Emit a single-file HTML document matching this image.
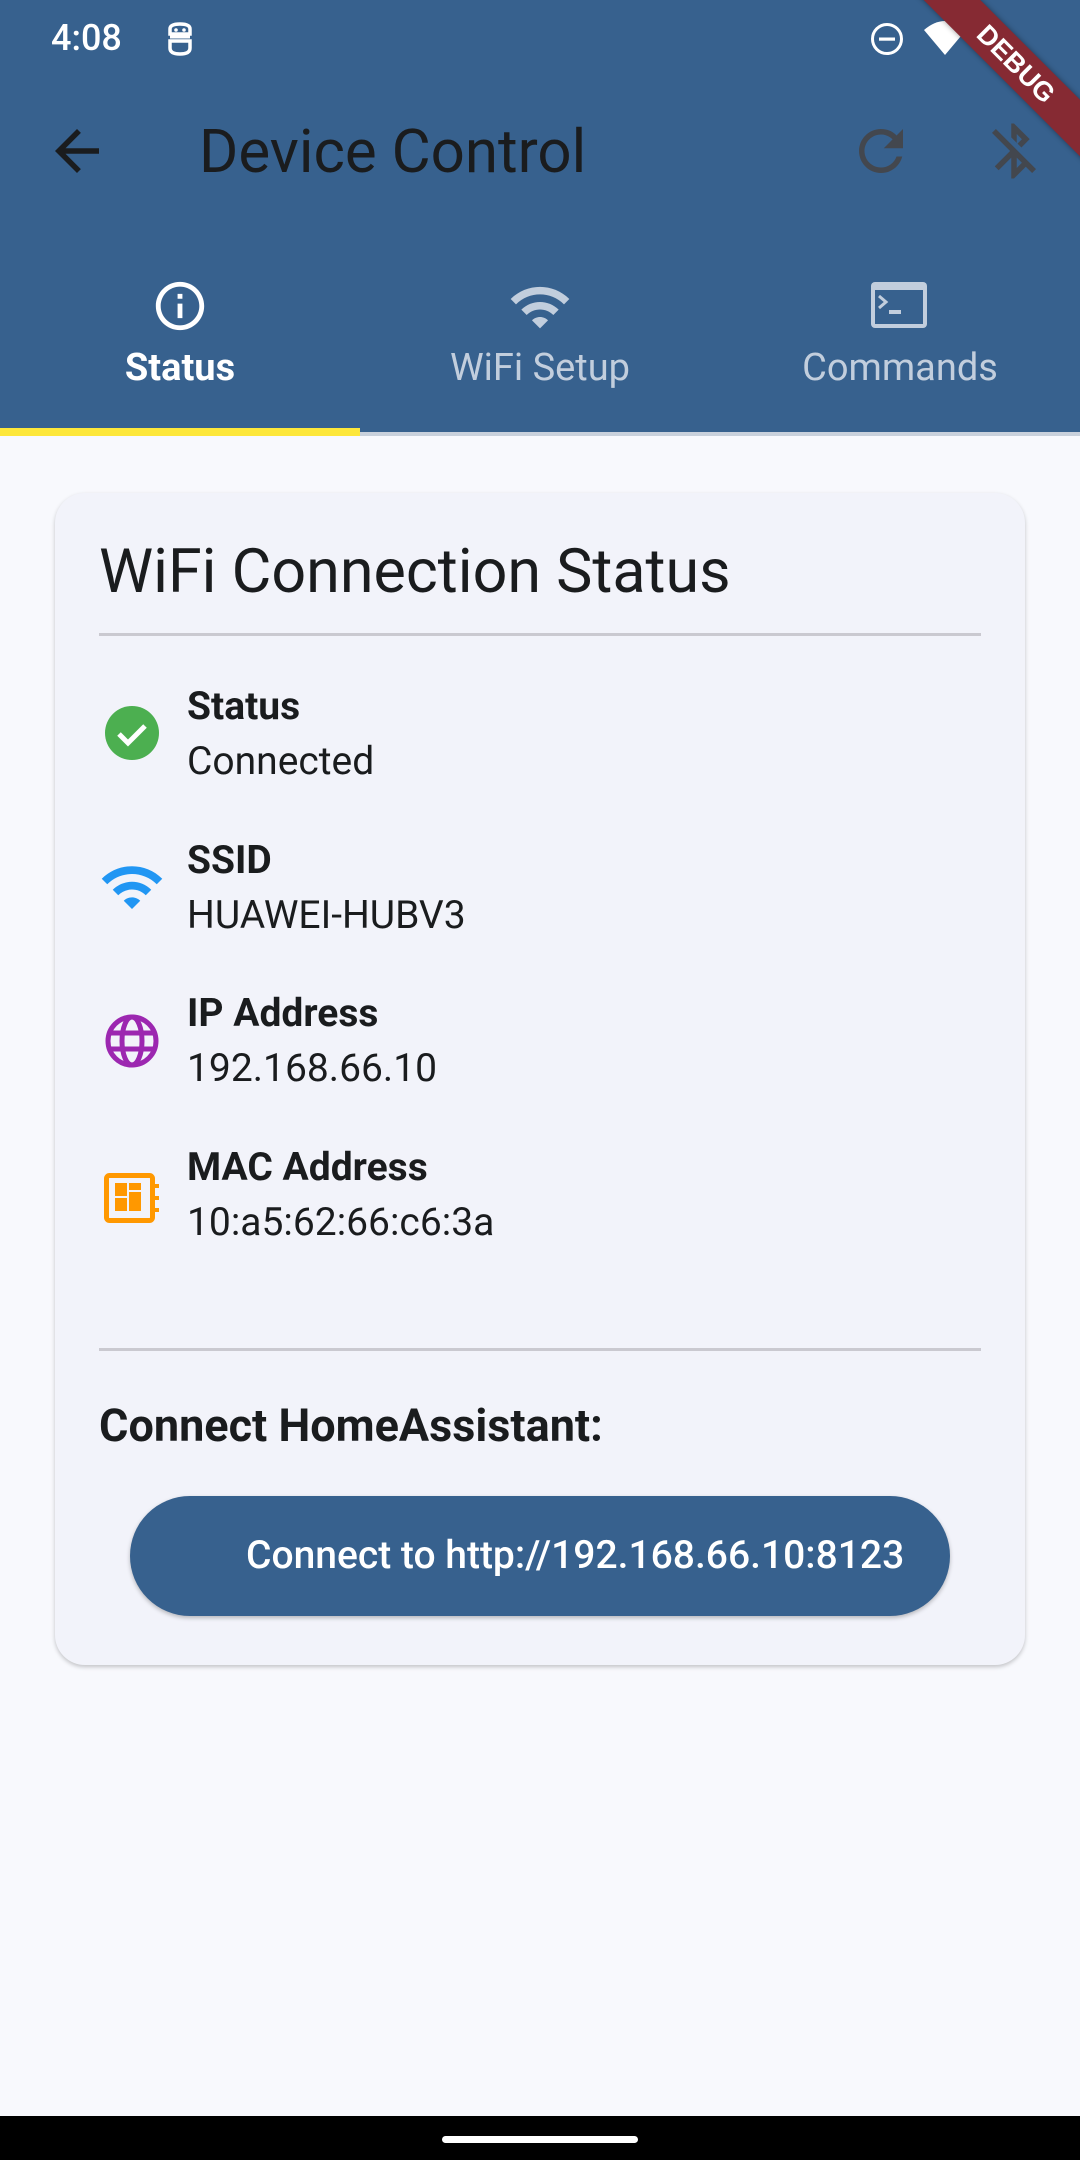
<!DOCTYPE html>
<html><head><meta charset="utf-8"><style>
*{margin:0;padding:0;box-sizing:border-box}
body{width:1080px;height:2160px;overflow:hidden;background:#F8F9FD;font-family:Roboto,"Liberation Sans",sans-serif;position:relative;color:#1a1c1e}
.abs{position:absolute}
.hdr{left:0;top:0;width:1080px;height:436px;background:#37618E}
.t{white-space:nowrap;line-height:1}
</style></head><body>
<div class="abs hdr"></div>
<!-- status bar -->
<div class="abs t" style="left:51px;top:20px;font-size:36px;color:#fff;font-weight:500">4:08</div>
<svg class="abs" style="left:165px;top:20px" width="30" height="38" viewBox="0 0 30 36"><path d="M5 8 Q5 3 15 3 Q25 3 25 8 V13 H5 Z M5 20 H25 V27 Q25 33 15 33 Q5 33 5 27 Z" fill="none" stroke="#fff" stroke-width="3.5"/><circle cx="11" cy="9" r="1.8" fill="#fff"/><circle cx="19" cy="9" r="1.8" fill="#fff"/><path d="M5 16 H25" stroke="#fff" stroke-width="3"/></svg>
<svg class="abs" style="left:870px;top:22px" width="34" height="34" viewBox="0 0 34 34"><circle cx="17" cy="17" r="14.5" fill="none" stroke="#fff" stroke-width="3"/><rect x="9" y="15.5" width="16" height="3.2" fill="#fff"/></svg>
<svg class="abs" style="left:924px;top:20px" width="42" height="36" viewBox="0 0 42 36"><path d="M0 10 Q21 -8 42 10 L21 35 Z" fill="#fff"/></svg>
<!-- debug banner -->
<div class="abs" style="left:866px;top:44px;width:300px;height:40px;background:#862A33;transform:rotate(45deg);box-shadow:0 0 6px rgba(0,0,0,.4);color:#fff;font-weight:bold;font-size:27px;text-align:center;line-height:40px;font-family:'Liberation Sans',sans-serif">DEBUG</div>
<!-- app bar -->
<svg class="abs" style="left:44px;top:118px" width="66" height="66" viewBox="0 0 24 24"><path d="M20 11H7.83l5.59-5.59L12 4l-8 8 8 8 1.41-1.41L7.83 13H20v-2z" fill="#1a1c1e"/></svg>
<div class="abs t" style="left:199px;top:122px;font-size:60px;color:#1a1c1e">Device Control</div>
<svg class="abs" style="left:848px;top:118px" width="66" height="66" viewBox="0 0 24 24"><path d="M17.65 6.35A7.958 7.958 0 0 0 12 4c-4.42 0-7.990 3.58-7.990 8s3.57 8 7.990 8c3.73 0 6.84-2.55 7.73-6h-2.08A5.99 5.99 0 0 1 12 18c-3.31 0-6-2.69-6-6s2.690-6 6-6c1.66 0 3.14.69 4.22 1.78L13 11h7V4l-2.35 2.35z" fill="#43474e"/></svg>
<svg class="abs" style="left:981px;top:118px" width="66" height="66" viewBox="0 0 24 24"><path d="M13 5.83l1.88 1.88-1.6 1.6 1.41 1.41 3.02-3.02L12 2h-1v5.03l2 2v-3.2zM5.41 4L4 5.41 10.59 12 5 17.59 6.41 19 11 14.41V22h1l4.29-4.29 2.3 2.29L20 18.59 5.41 4zM13 18.17v-3.76l1.88 1.88L13 18.17z" fill="#43474e"/></svg>
<!-- tabs -->
<svg class="abs" style="left:151px;top:277px" width="58" height="58" viewBox="0 0 24 24"><path d="M11 7h2v2h-2zm0 4h2v6h-2zm1-9C6.48 2 2 6.48 2 12s4.48 10 10 10 10-4.48 10-10S17.52 2 12 2zm0 18c-4.41 0-8-3.59-8-8s3.59-8 8-8 8 3.59 8 8-3.59 8-8 8z" fill="#fff"/></svg>
<div class="abs t" style="left:0;width:360px;text-align:center;top:349px;font-size:38px;font-weight:bold;color:#fff">Status</div>
<svg class="abs" style="left:508px;top:275px" width="64" height="64" viewBox="0 0 24 24"><path d="M1 9l2 2c4.97-4.97 13.03-4.97 18 0l2-2C16.93 2.93 7.08 2.93 1 9zm8 8l3 3 3-3c-1.65-1.66-4.34-1.66-6 0zm-4-4l2 2c2.76-2.76 7.24-2.76 10 0l2-2C15.14 9.140 8.87 9.14 5 13z" fill="#C2CEDD"/></svg>
<div class="abs t" style="left:360px;width:360px;text-align:center;top:349px;font-size:38px;color:#C2CEDD">WiFi Setup</div>
<svg class="abs" style="left:869px;top:280px" width="62" height="50" viewBox="0 0 62 50"><rect x="2" y="2" width="56" height="46" rx="4" fill="#C2CEDD"/><rect x="6" y="10" width="48" height="34" fill="#37618E"/><path d="M10 16 L17 22 L10 28" fill="none" stroke="#C2CEDD" stroke-width="3"/><rect x="20" y="30" width="12" height="4" fill="#C2CEDD"/></svg>
<div class="abs t" style="left:720px;width:360px;text-align:center;top:349px;font-size:38px;color:#C2CEDD">Commands</div>
<div class="abs" style="left:0;top:432px;width:1080px;height:4px;background:#C9D1DC"></div>
<div class="abs" style="left:0;top:428px;width:360px;height:8px;background:#FDE73A"></div>
<!-- card -->
<div class="abs" style="left:55px;top:493px;width:970px;height:1172px;background:#F2F3FA;border-radius:30px;box-shadow:0 2px 4px rgba(0,0,0,.22)"></div>
<div class="abs t" style="left:99px;top:541px;font-size:61px;color:#1a1c1e">WiFi Connection Status</div>
<div class="abs" style="left:99px;top:633px;width:882px;height:3px;background:#CAC9D0"></div>

<svg class="abs" style="left:104px;top:705px" width="56" height="56" viewBox="0 0 56 56"><circle cx="28" cy="28" r="27" fill="#4CAF50"/><path d="M15 29 L24 38 L41 21" fill="none" stroke="#fff" stroke-width="5"/></svg>
<div class="abs t" style="left:187px;top:687px;font-size:39px;font-weight:bold">Status</div>
<div class="abs t" style="left:187px;top:742px;font-size:39px">Connected</div>

<svg class="abs" style="left:99px;top:854px" width="66" height="66" viewBox="0 0 24 24"><path d="M1 9l2 2c4.97-4.97 13.03-4.97 18 0l2-2C16.93 2.93 7.08 2.93 1 9zm8 8l3 3 3-3c-1.65-1.66-4.34-1.66-6 0zm-4-4l2 2c2.76-2.76 7.24-2.76 10 0l2-2C15.14 9.14 8.87 9.14 5 13z" fill="#2196F3"/></svg>
<div class="abs t" style="left:187px;top:841px;font-size:39px;font-weight:bold">SSID</div>
<div class="abs t" style="left:187px;top:896px;font-size:39px">HUAWEI-HUBV3</div>

<svg class="abs" style="left:104px;top:1013px" width="56" height="56" viewBox="0 0 56 56"><g fill="none" stroke="#9C27B0" stroke-width="5"><circle cx="28" cy="28" r="24"/><ellipse cx="28" cy="28" rx="10" ry="24"/><path d="M5 20 H51 M5 36 H51"/></g></svg>
<div class="abs t" style="left:187px;top:994px;font-size:39px;font-weight:bold">IP Address</div>
<div class="abs t" style="left:187px;top:1049px;font-size:39px">192.168.66.10</div>

<svg class="abs" style="left:104px;top:1170px" width="56" height="56" viewBox="0 0 56 56"><rect x="2.5" y="5.5" width="46" height="45" rx="3" fill="none" stroke="#FF9800" stroke-width="5"/><path d="M49 16 H55 M49 28 H55 M49 40 H55" stroke="#FF9800" stroke-width="4"/><rect x="11" y="13" width="12" height="13" fill="#FF9800"/><rect x="11" y="28" width="12" height="13" fill="#FF9800"/><rect x="25" y="13" width="12" height="7" fill="#FF9800"/><rect x="25" y="22" width="12" height="19" fill="#FF9800"/></svg>
<div class="abs t" style="left:187px;top:1148px;font-size:39px;font-weight:bold">MAC Address</div>
<div class="abs t" style="left:187px;top:1203px;font-size:39px">10:a5:62:66:c6:3a</div>

<div class="abs" style="left:99px;top:1348px;width:882px;height:3px;background:#CAC9D0"></div>
<div class="abs t" style="left:99px;top:1403px;font-size:45px;font-weight:bold">Connect HomeAssistant:</div>
<div class="abs" style="left:130px;top:1496px;width:820px;height:120px;border-radius:60px;background:#37618E;box-shadow:0 2px 4px rgba(0,0,0,.25)"></div>
<div class="abs t" style="left:246px;top:1536px;font-size:39px;font-weight:500;color:#fff">Connect to http://192.168.66.10:8123</div>
<!-- nav bar -->
<div class="abs" style="left:0;top:2116px;width:1080px;height:44px;background:#000"></div>
<div class="abs" style="left:442px;top:2136px;width:196px;height:7px;border-radius:4px;background:#fff"></div>
</body></html>
